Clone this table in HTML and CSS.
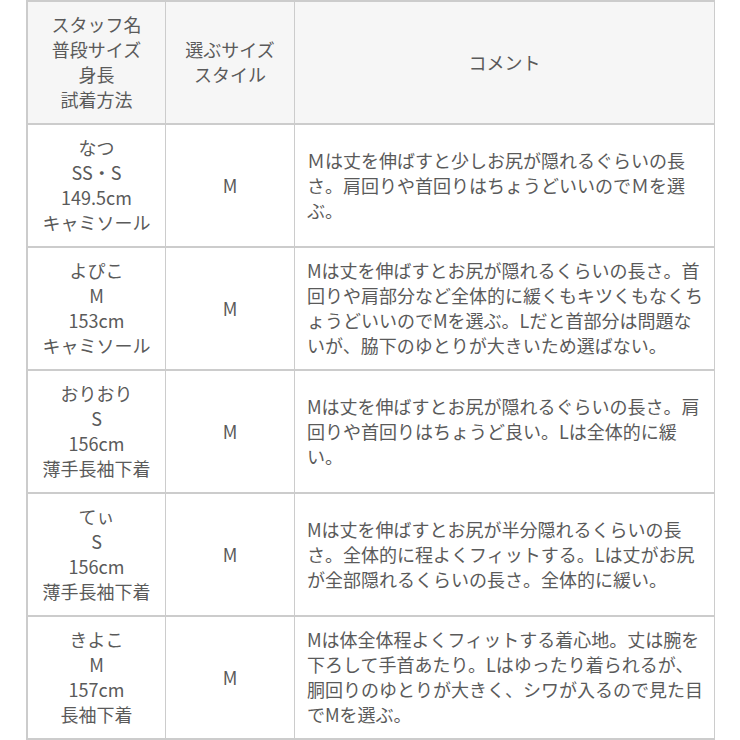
FILE: index.html
```html
<!DOCTYPE html>
<html lang="ja">
<head>
<meta charset="utf-8">
<title>サイズ比較</title>
<link rel="stylesheet" href="styles.css">
</head>
<body>
<table class="size-table">
  <thead>
    <tr>
      <th class="col-staff">スタッフ名<br>普段サイズ<br>身長<br>試着方法</th>
      <th class="col-size">選ぶサイズ<br>スタイル</th>
      <th class="col-comment">コメント</th>
    </tr>
  </thead>
  <tbody>
    <tr>
      <td class="staff">なつ<br>SS・S<br>149.5cm<br>キャミソール</td>
      <td class="size">M</td>
      <td class="comment">Ｍは丈を伸ばすと少しお尻が隠れるぐらいの長<br>さ。肩回りや首回りはちょうどいいのでＭを選<br>ぶ。</td>
    </tr>
    <tr>
      <td class="staff">よぴこ<br>M<br>153cm<br>キャミソール</td>
      <td class="size">M</td>
      <td class="comment">Mは丈を伸ばすとお尻が隠れるくらいの長さ。首<br>回りや肩部分など全体的に緩くもキツくもなくち<br>ょうどいいのでMを選ぶ。Lだと首部分は問題な<br>いが、脇下のゆとりが大きいため選ばない。</td>
    </tr>
    <tr>
      <td class="staff">おりおり<br>S<br>156cm<br>薄手長袖下着</td>
      <td class="size">M</td>
      <td class="comment">Mは丈を伸ばすとお尻が隠れるぐらいの長さ。肩<br>回りや首回りはちょうど良い。Lは全体的に緩<br>い。</td>
    </tr>
    <tr>
      <td class="staff">てぃ<br>S<br>156cm<br>薄手長袖下着</td>
      <td class="size">M</td>
      <td class="comment">Mは丈を伸ばすとお尻が半分隠れるくらいの長<br>さ。全体的に程よくフィットする。Lは丈がお尻<br>が全部隠れるくらいの長さ。全体的に緩い。</td>
    </tr>
    <tr>
      <td class="staff">きよこ<br>M<br>157cm<br>長袖下着</td>
      <td class="size">M</td>
      <td class="comment">Mは体全体程よくフィットする着心地。丈は腕を<br>下ろして手首あたり。Lはゆったり着られるが、<br>胴回りのゆとりが大きく、シワが入るので見た目<br>でMを選ぶ。</td>
    </tr>
  </tbody>
</table>
</body>
</html>
```

FILE: styles.css
```css
html, body {
  margin: 0;
  padding: 0;
  background: #ffffff;
}

body {
  padding-left: 26px;
  font-family: "Noto Sans CJK JP", "Noto Sans", sans-serif;
  font-size: 18px;
  line-height: 25px;
  color: #5a5a5a;
}

.size-table {
  border-collapse: separate;
  border-spacing: 0;
  table-layout: fixed;
  width: 689px;
  border-top: 2px solid #cccccc;
  border-left: 2px solid #cccccc;
}

.size-table th,
.size-table td {
  box-sizing: border-box;
  height: 123px;
  padding: 10px 12px 11px 12px;
  border-right: 1px solid #cccccc;
  border-bottom: 2px solid #cccccc;
  vertical-align: middle;
  font-weight: normal;
  white-space: nowrap;
}

.size-table th {
  background: #f6f6f6;
  text-align: center;
}

.col-staff { width: 138px; }
.col-size { width: 129px; }
.col-comment { width: 420px; }

.staff,
.size {
  text-align: center;
}

.comment {
  text-align: left;
}
```
